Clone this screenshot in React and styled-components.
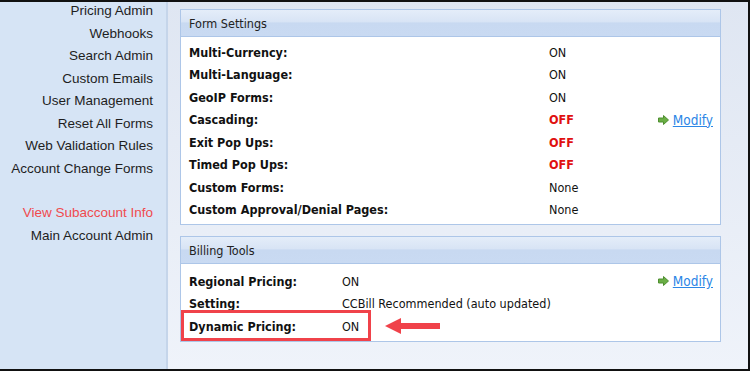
import * as React from 'react';
import styled, { createGlobalStyle } from 'styled-components';

const GlobalStyle = createGlobalStyle`
  html, body { margin: 0; padding: 0; }
  body { background: #fff; }
`;

const sideLinks = [
  'Pricing Admin',
  'Webhooks',
  'Search Admin',
  'Custom Emails',
  'User Management',
  'Reset All Forms',
  'Web Validation Rules',
  'Account Change Forms',
];

const formSettings = [
  { label: 'Multi-Currency:', value: 'ON' },
  { label: 'Multi-Language:', value: 'ON' },
  { label: 'GeoIP Forms:', value: 'ON' },
  { label: 'Cascading:', value: 'OFF', off: true, modify: true },
  { label: 'Exit Pop Ups:', value: 'OFF', off: true },
  { label: 'Timed Pop Ups:', value: 'OFF', off: true },
  { label: 'Custom Forms:', value: 'None' },
  { label: 'Custom Approval/Denial Pages:', value: 'None' },
];

const billingTools = [
  { label: 'Regional Pricing:', value: 'ON', modify: true },
  { label: 'Setting:', value: 'CCBill Recommended (auto updated)' },
  { label: 'Dynamic Pricing:', value: 'ON', highlight: true },
];

const GreenArrow = () => (
  <svg width="11" height="10" viewBox="0 0 11 10">
    <path d="M0.5 3 H5.5 V0.5 L10.5 5 L5.5 9.5 V7 H0.5 Z" fill="#6aae45" stroke="#4f8f30" strokeWidth="1" />
  </svg>
);

const RedArrow = () => (
  <svg width="56" height="18" viewBox="0 0 56 18">
    <path d="M0 9 L16 1 V6 H55 V12 H16 V17 Z" fill="#f0424a" />
  </svg>
);

const SettingRow = ({ item, labelWidth }) => (
  <Row $labelWidth={labelWidth}>
    <Label>{item.label}</Label>
    <Value $off={item.off}>{item.value}</Value>
    {item.modify ? (
      <ModifyLink href="#">
        <GreenArrow />
        <span>Modify</span>
      </ModifyLink>
    ) : (
      <span />
    )}
    {item.highlight && (
      <>
        <HighlightBox />
        <ArrowMark>
          <RedArrow />
        </ArrowMark>
      </>
    )}
  </Row>
);

const Panel = ({ title, items, labelWidth, bodyPad }) => (
  <PanelBox>
    <PanelHeader>{title}</PanelHeader>
    <PanelBody $pad={bodyPad}>
      {items.map((item) => (
        <SettingRow key={item.label} item={item} labelWidth={labelWidth} />
      ))}
    </PanelBody>
  </PanelBox>
);

export default function App() {
  return (
    <>
      <GlobalStyle />
      <Frame>
        <Sidebar>
          {sideLinks.map((l) => (
            <SideLink key={l}>{l}</SideLink>
          ))}
          <SideSpacer />
          <SideLink $active>View Subaccount Info</SideLink>
          <SideLink>Main Account Admin</SideLink>
        </Sidebar>
        <Main>
          <Panel title="Form Settings" items={formSettings} labelWidth={360} bodyPad="4px 7px 3px 8px" />
          <Panel title="Billing Tools" items={billingTools} labelWidth={153} bodyPad="6px 7px 3px 8px" />
        </Main>
      </Frame>
    </>
  );
}

const Frame = styled.div`
  box-sizing: border-box;
  width: 750px;
  height: 371px;
  display: flex;
  border-top: 2px solid #111;
  border-right: 2px solid #111;
  border-bottom: 2px solid #111;
  overflow: hidden;
`;

const Sidebar = styled.div`
  width: 168px;
  flex-shrink: 0;
  box-sizing: border-box;
  background: #d6e4f5;
  border-right: 2px solid #c5d5ea;
  display: flex;
  flex-direction: column;
  align-items: flex-end;
  padding: 0 13px 0 0;
  margin-top: -2px;
`;

const SideLink = styled.div`
  font-family: 'Liberation Sans', Arial, sans-serif;
  font-size: 13.5px;
  line-height: 22.5px;
  color: ${(p) => (p.$active ? '#f04a4e' : '#1e1e1e')};
  white-space: nowrap;
`;

const SideSpacer = styled.div`
  height: 22px;
`;

const Main = styled.div`
  flex: 1;
  background: linear-gradient(#dfe6f2, #eff3fa);
  padding: 7px 27px 0 12px;
  display: flex;
  flex-direction: column;
  gap: 11px;
`;

const PanelBox = styled.div`
  border: 1px solid #adc6e8;
  background: #fff;
`;

const PanelHeader = styled.div`
  height: 27px;
  box-sizing: border-box;
  padding: 1px 8px 0;
  display: flex;
  align-items: center;
  font-family: 'DejaVu Sans Condensed', Tahoma, sans-serif;
  font-size: 12.5px;
  color: #222;
  background: linear-gradient(#e4edf9 0%, #d8e4f5 45%, #c8d9f1 50%, #c9daf2 100%);
  border-bottom: 1px solid #adc6e8;
`;

const PanelBody = styled.div`
  padding: ${(p) => p.$pad};
`;

const Row = styled.div`
  position: relative;
  display: grid;
  grid-template-columns: ${(p) => p.$labelWidth}px 1fr auto;
  align-items: center;
  height: 22.5px;
  font-family: 'DejaVu Sans Condensed', Tahoma, sans-serif;
  font-size: 12.5px;
  color: #111;
`;

const Label = styled.span`
  font-weight: bold;
  white-space: nowrap;
`;

const Value = styled.span`
  white-space: nowrap;
  font-weight: ${(p) => (p.$off ? 'bold' : 'normal')};
  color: ${(p) => (p.$off ? '#e01010' : '#111')};
`;

const ModifyLink = styled.a`
  display: flex;
  align-items: center;
  gap: 4px;
  color: #2c86e6;
  text-decoration: underline;
  font-size: 13.5px;
`;

const HighlightBox = styled.div`
  position: absolute;
  left: -8px;
  top: -5px;
  width: 190px;
  height: 31px;
  box-sizing: border-box;
  border: 3px solid #f0424a;
  pointer-events: none;
`;

const ArrowMark = styled.div`
  position: absolute;
  left: 196px;
  top: 2px;
  line-height: 0;
`;
